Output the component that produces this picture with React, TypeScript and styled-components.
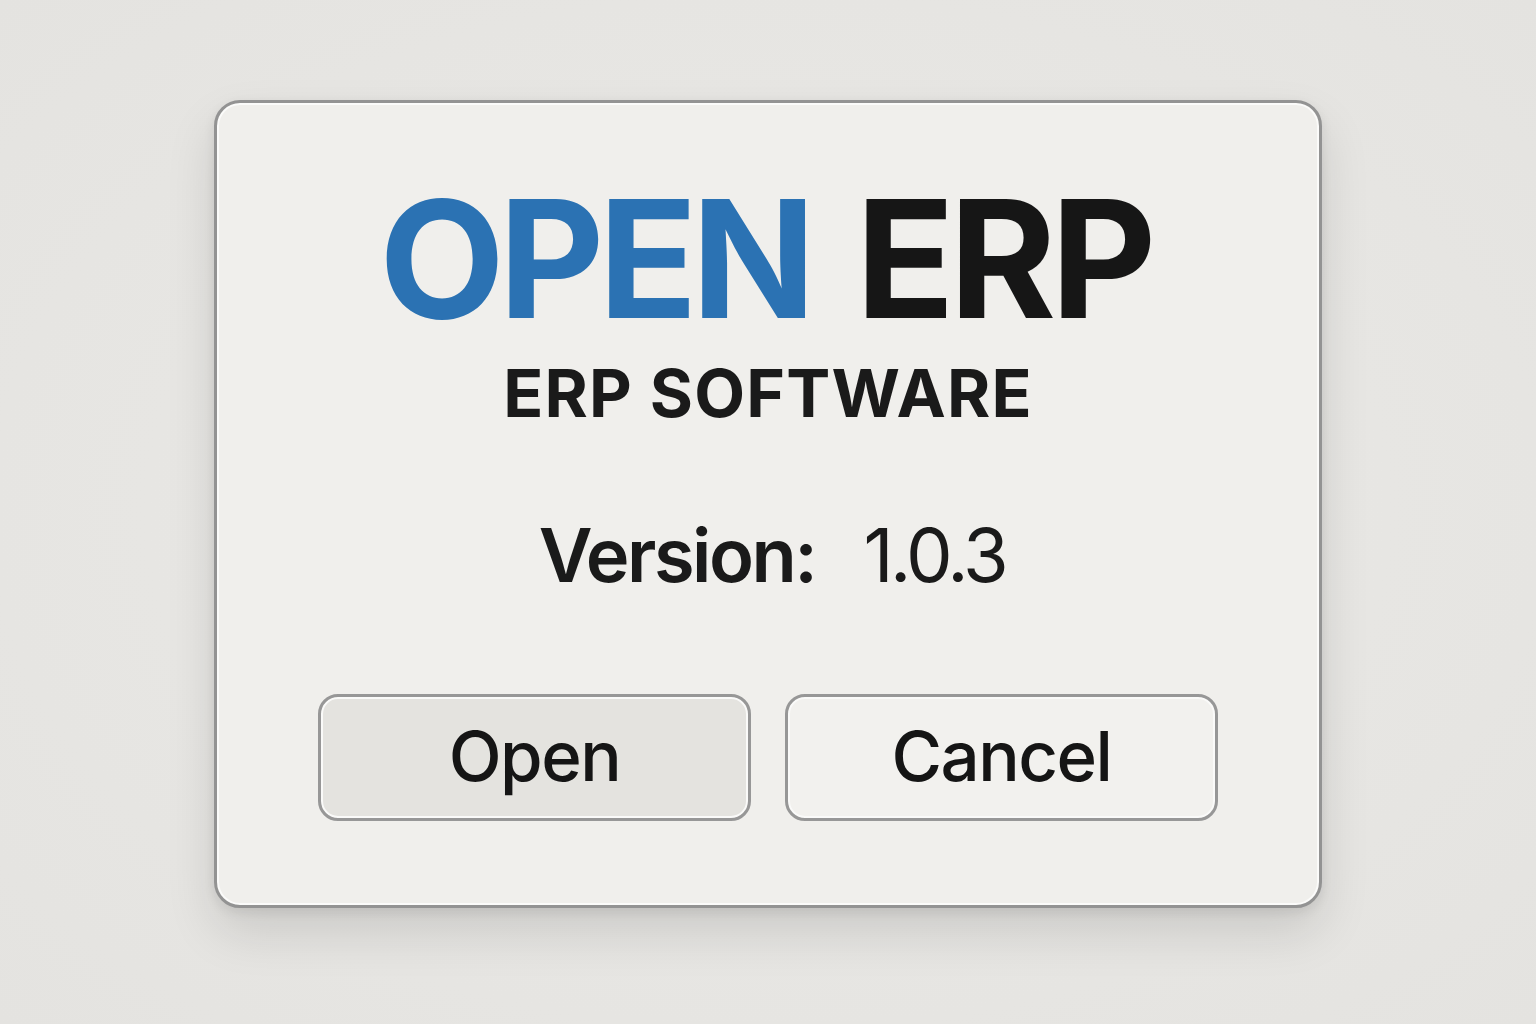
import styled, { createGlobalStyle } from "styled-components";

const GlobalStyle = createGlobalStyle`
  html, body {
    margin: 0;
    padding: 0;
    background: #e6e5e2;
  }
  body {
    font-family: Inter, "Liberation Sans", sans-serif;
    color: #1a1a1a;
  }
`;

const Page = styled.div`
  width: 1536px;
  height: 1024px;
  display: flex;
  justify-content: center;
  align-items: flex-start;
  padding-top: 100px;
  box-sizing: border-box;
  background: radial-gradient(ellipse at center, #ebeae7 0%, #e4e3e0 100%);
`;

const Dialog = styled.div`
  width: 1108px;
  height: 808px;
  box-sizing: border-box;
  background: #f0efec;
  border: 3px solid #939393;
  border-radius: 26px;
  box-shadow: inset 0 0 0 2px #fbfbfa, 0 24px 50px rgba(0, 0, 0, 0.12),
    0 4px 12px rgba(0, 0, 0, 0.08);
  display: flex;
  flex-direction: column;
  align-items: center;
  padding-top: 74px;
`;

const Title = styled.h1`
  margin: 0;
  margin-left: -6px;
  font-size: 163px;
  line-height: 1;
  display: flex;
  gap: 46px;
`;

const Word = styled.span<{ $tone: "blue" | "dark" }>`
  color: ${(p) => (p.$tone === "blue" ? "#2b72b3" : "#161616")};
  font-weight: ${(p) => (p.$tone === "blue" ? 650 : 700)};
  letter-spacing: ${(p) => (p.$tone === "blue" ? "-6px" : "-5.5px")};
`;

const Subtitle = styled.h2`
  margin: 20px 0 0;
  font-size: 66px;
  line-height: 1;
  font-weight: 700;
  letter-spacing: 1.2px;
  color: #1a1a1a;
`;

const VersionRow = styled.div`
  margin-top: 92px;
  margin-left: 8px;
  font-size: 74px;
  line-height: 1;
  letter-spacing: -2.5px;
  display: flex;
  gap: 48px;
  color: #1a1a1a;
`;

const VersionLabel = styled.span`
  font-weight: 600;
`;

const VersionValue = styled.span`
  font-weight: 400;
  letter-spacing: -3.5px;
`;

const ButtonRow = styled.div`
  margin-top: 102px;
  display: flex;
  gap: 34px;
`;

const Button = styled.button<{ $primary?: boolean }>`
  width: 433px;
  height: 127px;
  box-sizing: border-box;
  border: 3px solid #979797;
  border-radius: 20px;
  background: ${(p) => (p.$primary ? "#e4e3df" : "#f2f1ee")};
  box-shadow: inset 0 0 0 2px #fafaf9;
  font-family: Inter, "Liberation Sans", sans-serif;
  font-size: 69px;
  font-weight: 500;
  letter-spacing: -1.5px;
  color: #151515;
  cursor: pointer;
  padding: 0 0 4px;
`;

export default function App() {
  return (
    <>
      <GlobalStyle />
      <Page>
        <Dialog>
          <Title>
            <Word $tone="blue">OPEN</Word>
            <Word $tone="dark">ERP</Word>
          </Title>
          <Subtitle>ERP SOFTWARE</Subtitle>
          <VersionRow>
            <VersionLabel>Version:</VersionLabel>
            <VersionValue>1.0.3</VersionValue>
          </VersionRow>
          <ButtonRow>
            <Button $primary>Open</Button>
            <Button>Cancel</Button>
          </ButtonRow>
        </Dialog>
      </Page>
    </>
  );
}
